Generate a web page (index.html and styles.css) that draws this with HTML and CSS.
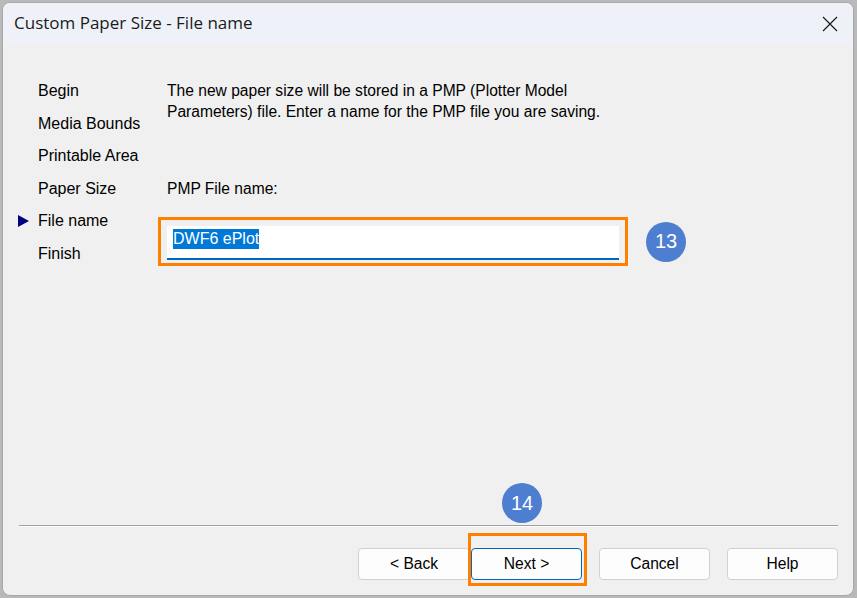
FILE: index.html
```html
<!DOCTYPE html>
<html lang="en">
<head>
  <meta charset="UTF-8" />
  <title>Custom Paper Size - File name</title>
  <link rel="stylesheet" href="styles.css">
</head>
<body>
  <div class="dialog">
    <div class="titlebar">
      <span class="title">Custom Paper Size - File name</span>
      <svg class="close" width="16" height="16" viewBox="0 0 16 16">
        <path d="M1 1 L15 15 M15 1 L1 15" stroke="#1a1a1a" stroke-width="1.2" fill="none"/>
      </svg>
    </div>

    <div class="content">
      <ul class="steps">
        <li>Begin</li>
        <li>Media Bounds</li>
        <li>Printable Area</li>
        <li>Paper Size</li>
        <li class="current">File name</li>
        <li>Finish</li>
      </ul>

      <div class="main">
        <p class="intro">The new paper size will be stored in a PMP (Plotter Model<br>Parameters) file. Enter a name for the PMP file you are saving.</p>
        <div class="label">PMP File name:</div>
        <div class="field-row">
          <div class="highlight">
            <div class="textbox"><span class="selected">DWF6 ePlot</span></div>
          </div>
          <div class="badge">13</div>
        </div>
      </div>
    </div>

    <div class="footer">
      <div class="separator"></div>
      <div class="buttons">
        <button class="btn">&lt; Back</button>
        <button class="btn default">Next &gt;</button>
        <button class="btn gap">Cancel</button>
        <button class="btn gap">Help</button>
      </div>
      <div class="badge badge-next">14</div>
      <div class="highlight-next"></div>
    </div>
  </div>
</body>
</html>
```

FILE: styles.css
```css
body {
  margin: 0;
  width: 857px;
  height: 598px;
  background-color: #b9b9b9;
  font-family: "Liberation Sans", Arial, sans-serif;
  font-size: 15.6px;
  color: #000;
  overflow: hidden;
}
.dialog {
  position: relative;
  display: flex;
  flex-direction: column;
  box-sizing: border-box;
  width: 852px;
  height: 594px;
  margin: 2px 0 0 2px;
  background-color: #f0f0f0;
  border: 1px solid #a8a8a8;
  border-radius: 8px;
  overflow: hidden;
}
.titlebar {
  display: flex;
  align-items: center;
  justify-content: space-between;
  height: 41px;
  padding: 0 15px 0 11px;
  background-color: #eef2f8;
  flex-shrink: 0;
}
.title {
  font-family: "Open Sans", "Noto Sans", sans-serif;
  font-size: 17px;
  color: #1b1b1b;
  padding-bottom: 2px;
}
.close {
  display: block;
}
.content {
  display: flex;
  flex: 1;
  padding-top: 33px;
}
.steps {
  list-style: none;
  margin: 0;
  padding: 0 0 0 35px;
  width: 119px;
  font-size: 16px;
}
.steps li {
  position: relative;
  height: 32.5px;
  line-height: 27px;
}
.steps li.current::before {
  content: "";
  position: absolute;
  left: -20px;
  top: 8px;
  border-left: 11px solid #000080;
  border-top: 6px solid transparent;
  border-bottom: 6px solid transparent;
}
.main {
  padding-left: 1px;
}
.intro {
  margin: 3px 0 0 9px;
  line-height: 21px;
}
.label {
  margin: 56px 0 0 9px;
  line-height: 21px;
}
.field-row {
  display: flex;
  align-items: center;
  margin-top: 18px;
}
.highlight {
  width: 452px;
  padding: 6px 6px 3px 6px;
  border: 3px solid #ff7f00;
}
.textbox {
  box-sizing: border-box;
  height: 34px;
  padding: 3px 6px 0;
  background-color: #fff;
  border-bottom: 2px solid #0067c0;
  font-size: 16px;
}
.selected {
  background-color: #0078d7;
  color: #fff;
  line-height: 20px;
  display: inline-block;
}
.badge {
  display: flex;
  align-items: center;
  justify-content: center;
  width: 40px;
  height: 40px;
  margin-left: 18px;
  border-radius: 50%;
  background-color: #4d7ecf;
  color: #fff;
  font-size: 20px;
}
.footer {
  position: relative;
  padding: 0 15px 15px 15px;
}
.separator {
  margin-left: 1px;
  height: 0;
  border-top: 1px solid #a0a0a0;
  border-bottom: 1px solid #fff;
}
.buttons {
  display: flex;
  justify-content: flex-end;
  margin-top: 21px;
}
.btn {
  width: 112px;
  height: 32px;
  margin-left: 1px;
  background-color: #fdfdfd;
  border: 1px solid #d0d0d0;
  border-radius: 4px;
  font-family: "Liberation Sans", Arial, sans-serif;
  font-size: 15.6px;
  color: #000;
}
.btn.default {
  width: 111px;
  border-color: #0067c0;
}
.btn.gap {
  width: 111px;
  margin-left: 17px;
}
.badge-next {
  position: absolute;
  left: 499px;
  top: -42px;
  margin: 0;
}
.highlight-next {
  position: absolute;
  left: 465px;
  top: 8px;
  width: 113px;
  height: 47px;
  border: 3px solid #ff7f00;
}
```
